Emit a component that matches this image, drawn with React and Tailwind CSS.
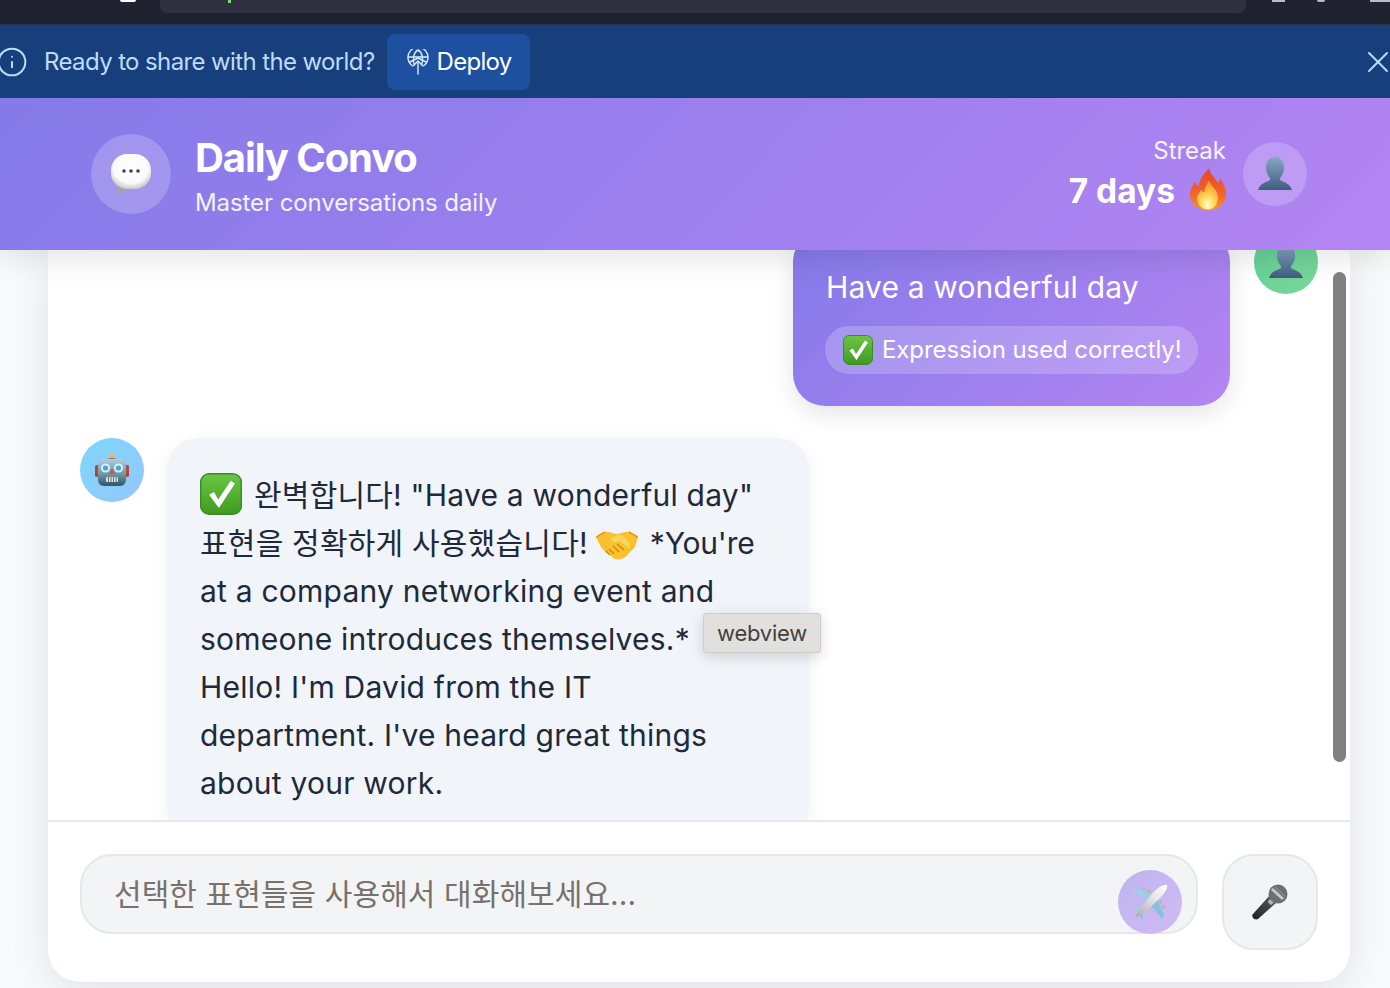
import React from 'react';
import { Info, X } from 'lucide-react';

const Balloon = ({ size = 42 }) => (
    <svg width={size} height={size} viewBox="0 0 42 42">
        <defs>
            <radialGradient id="balloonFill" cx="0.5" cy="0.4" r="0.62">
                <stop offset="0" stopColor="#ffffff" />
                <stop offset="0.7" stopColor="#fafafa" />
                <stop offset="1" stopColor="#c4c4c4" />
            </radialGradient>
        </defs>
        <path d="M9 30 C9 35 7 39 5 41 C11 40 16 37 19 33 Z" fill="#a3a3a3" />
        <rect x="1" y="1" width="40" height="35" rx="16" fill="url(#balloonFill)" />
        <circle cx="14" cy="18" r="1.8" fill="#444" />
        <circle cx="21" cy="18" r="1.8" fill="#444" />
        <circle cx="28" cy="18" r="1.8" fill="#444" />
    </svg>
);

const Person = ({ size = 36, id = 'bust' }) => (
    <svg width={size} height={size} viewBox="0 0 36 36">
        <defs>
            <linearGradient id={id} x1="0" y1="0" x2="0" y2="1">
                <stop offset="0" stopColor="#88a6c2" />
                <stop offset="1" stopColor="#3f5e80" />
            </linearGradient>
        </defs>
        <path
            d="M18 1 C24 1 27 6 27 12 C27 16 25 20 23 22 L23 24 C26 26 33 27 35 34 L1 34 C3 27 10 26 13 24 L13 22 C11 20 9 16 9 12 C9 6 12 1 18 1 Z"
            fill={`url(#${id})`}
        />
    </svg>
);

const Fire = () => (
    <svg width="36" height="43" viewBox="0 0 36 42" className="-mt-[4px]">
        <defs>
            <linearGradient id="flameOuter" x1="0" y1="0" x2="0" y2="1">
                <stop offset="0" stopColor="#e8452a" />
                <stop offset="0.6" stopColor="#f0642a" />
                <stop offset="1" stopColor="#f59a2c" />
            </linearGradient>
            <radialGradient id="flameInner" cx="0.5" cy="0.85" r="0.75">
                <stop offset="0" stopColor="#fffbe0" />
                <stop offset="0.35" stopColor="#ffe266" />
                <stop offset="1" stopColor="#fb9a2a" />
            </radialGradient>
        </defs>
        <path
            d="M19 0 C21 7 26 10 28 15 C29 13 30 12 30 10 C34 15 36 21 36 26 C36 35 28 42 18 42 C8 42 0 35 0 26 C0 21 3 17 5 13 C6 16 7 17 9 18 C9 11 14 5 19 0 Z"
            fill="url(#flameOuter)"
        />
        <path
            d="M19 12 C21 18 28 21 28 29 C28 36 24 41 18 41 C12 41 7 36 7 30 C7 26 10 24 11 21 C12 23 13 24 14 24 C14 20 17 16 19 12 Z"
            fill="url(#flameInner)"
        />
    </svg>
);

const Check = ({ size = 30, id = 'checkFill', className = '' }) => (
    <svg width={size} height={size} viewBox="0 0 30 30" className={`shrink-0 ${className}`}>
        <defs>
            <linearGradient id={id} x1="0" y1="0" x2="0" y2="1">
                <stop offset="0" stopColor="#6cc644" />
                <stop offset="1" stopColor="#3f9a22" />
            </linearGradient>
        </defs>
        <rect x="0.5" y="0.5" width="29" height="29" rx="6" fill={`url(#${id})`} stroke="#3d8a24" />
        <path d="M6.5 15.5 L10 13.5 L13 19 L22 5.5 L25 7.5 L13.5 25 Z" fill="#ffffff" />
    </svg>
);

const Handshake = () => (
    <svg width="42" height="30" viewBox="0 0 42 30" className="inline-block align-[-7px] mx-[8px]">
        <path d="M0 6 L9 1 C13 0 16 3 21 3 C26 3 29 0 33 1 L42 6 L39 16 L33 22 C31 26 27 27 25 28 C21 30 17 27 15 25 C11 23 8 20 5 16 Z" fill="#fbc02d" />
        <path d="M15 7 L22 4 C27 3 30 8 34 13 L33 18 C29 14 26 11 22 10 C19 12 16 12 15 7 Z" fill="#f9d65c" />
        <path d="M13 18 L18 23 M17 15 L23 21 M21 13 L28 19 M10 20 L14 24" stroke="#c98a12" strokeWidth="1.4" fill="none" />
        <path d="M0 6 L9 1 M33 1 L42 6" stroke="#e09a16" strokeWidth="1.5" />
    </svg>
);

const Robot = () => (
    <svg width="34" height="34" viewBox="0 0 34 34">
        <defs>
            <linearGradient id="robotHead" x1="0" y1="0" x2="0" y2="1">
                <stop offset="0" stopColor="#b5ccd6" />
                <stop offset="0.55" stopColor="#6f98a8" />
                <stop offset="1" stopColor="#2f5566" />
            </linearGradient>
        </defs>
        <circle cx="17" cy="3" r="2.6" fill="#f5b63c" />
        <path d="M12 7 C12 4.5 22 4.5 22 7 Z" fill="#6b4d9e" />
        <rect x="0" y="12" width="4" height="12" rx="1.5" fill="#b0483c" />
        <rect x="30" y="12" width="4" height="12" rx="1.5" fill="#b0483c" />
        <rect x="3" y="6" width="28" height="27" rx="6" fill="url(#robotHead)" />
        <circle cx="10.5" cy="15" r="4.6" fill="#d7eef7" />
        <circle cx="10.5" cy="15" r="2.6" fill="#3fa9d8" />
        <circle cx="23.5" cy="15" r="4.6" fill="#d7eef7" />
        <circle cx="23.5" cy="15" r="2.6" fill="#3fa9d8" />
        <path d="M17 15 L20 21 L14 21 Z" fill="#d8503f" />
        <rect x="11" y="24" width="12" height="5" rx="1.5" fill="#e6e6e6" />
        <path d="M13.5 24 V29 M16 24 V29 M18.5 24 V29 M21 24 V29" stroke="#4a4a4a" strokeWidth="0.8" />
    </svg>
);

const Plane = () => (
    <svg width="36" height="36" viewBox="0 0 36 36">
        <defs>
            <linearGradient id="planeBody" x1="0" y1="1" x2="1" y2="0">
                <stop offset="0" stopColor="#a9a9a9" />
                <stop offset="0.6" stopColor="#e6e6e6" />
                <stop offset="1" stopColor="#ffffff" />
            </linearGradient>
        </defs>
        <path d="M1 6 L5 4 L23 12 L17 19 Z" fill="#9ccfe6" />
        <path d="M30 35 L32 31 L24 13 L17 19 Z" fill="#86c2dc" />
        <path d="M1 25 L3 24 L11 26 L8 30 Z" fill="#9ccfe6" />
        <path d="M10 35 L11 33 L10 26 L6 29 Z" fill="#86c2dc" />
        <rect x="10" y="3" width="4" height="3" rx="1" fill="#b8b8b8" />
        <rect x="15" y="6" width="4" height="3" rx="1" fill="#b8b8b8" />
        <rect x="30" y="21" width="3" height="4" rx="1" fill="#b8b8b8" />
        <rect x="27" y="16" width="3" height="4" rx="1" fill="#b8b8b8" />
        <path d="M35 1 C36 5 32 10 26 16 L12 29 L3 34 L7 25 L20 10 C25 4 31 0 35 1 Z" fill="url(#planeBody)" />
    </svg>
);

const Mic = () => (
    <svg width="36" height="36" viewBox="0 0 36 36">
        <defs>
            <linearGradient id="micBody" x1="0" y1="1" x2="1" y2="0">
                <stop offset="0" stopColor="#1f1f1f" />
                <stop offset="1" stopColor="#5f5f5f" />
            </linearGradient>
        </defs>
        <path d="M18 11 L25 18 L6 35 C4 36 2 35 1 34 C0 32 0 31 1 30 Z" fill="url(#micBody)" />
        <rect x="16" y="15" width="6" height="5" rx="1.5" transform="rotate(-45 19 17)" fill="#b5b5b5" />
        <circle cx="26" cy="10" r="9.5" fill="#6f6f6f" />
        <path d="M20 5 L31 15" stroke="#c9c9c9" strokeWidth="3" />
        <path d="M23 3 L33 12" stroke="#8a8a8a" strokeWidth="1.5" />
    </svg>
);

const DeployIcon = () => (
    <svg width="22" height="26" viewBox="0 0 22 26" fill="none" stroke="#dbeafe" strokeWidth="1.4" strokeLinecap="round" strokeLinejoin="round">
        <path d="M6 17 A10 10 0 1 1 16 17" />
        <path d="M1.5 8 H20.5" />
        <path d="M3 13 L11 9 L19 13" />
        <path d="M7.5 16 C5 10 7 3 11 1 C15 3 17 10 14.5 16" />
        <path d="M11 25 V12" />
        <path d="M7 16 L11 12 L15 16" />
    </svg>
);

const App = () => {
    return (
        <div className="w-full h-[988px] flex flex-col overflow-hidden bg-[#f8fafc] text-[#1e293b] font-['Inter','Noto_Sans_CJK_KR',sans-serif]">
            {/* Browser chrome, cut off at the top */}
            <div className="h-[25px] shrink-0 bg-[#1f2330] border-b border-[#2e3348] flex items-start">
                <div className="w-[160px] shrink-0 flex justify-end pr-[24px]">
                    <div className="w-[16px] h-[2px] rounded-b-full bg-white" />
                </div>
                <div className="flex-1 h-[13px] bg-[#2d3142] rounded-b-lg pl-[68px]">
                    <div className="w-[3px] h-[3px] bg-[#7ddc6f]" />
                </div>
                <div className="w-[144px] shrink-0 flex pl-[26px]">
                    <div className="w-[13px] h-[2px] bg-[#b8bcc6]" />
                    <div className="ml-[32px] w-[8px] h-[2px] rounded-b-full bg-[#b8bcc6]" />
                    <div className="ml-[45px] w-[20px] h-[2px] bg-[#b8bcc6]" />
                </div>
            </div>

            {/* Deploy banner */}
            <div className="relative z-20 h-[73px] shrink-0 bg-[#173f7c] flex items-center">
                <Info size={32} strokeWidth={1.5} className="text-[#bfdbfe] -ml-[4px] shrink-0" />
                <span className="ml-[16px] text-[24px] tracking-[-0.62px] text-[#bfdbfe]">Ready to share with the world?</span>
                <button className="ml-[12px] h-[56px] w-[143px] rounded-lg bg-[#1e50a0] flex items-center pl-[20px] text-[24px] tracking-[-0.7px] text-white">
                    <DeployIcon />
                    <span className="ml-[8px]">Deploy</span>
                </button>
                <X size={36} strokeWidth={1.3} className="ml-auto -mr-[6px] text-[#bfdbfe] shrink-0" />
            </div>

            {/* Header */}
            <header className="relative z-10 h-[152px] shrink-0 flex items-center justify-between pl-[91px] pr-[83px] bg-[linear-gradient(135deg,#857ae9,#b385f2)] shadow-[0_6px_30px_rgba(0,0,0,0.12)]">
                <div className="flex items-center gap-[24px]">
                    <div className="w-[80px] h-[80px] rounded-full bg-white/20 flex items-center justify-center">
                        <Balloon />
                    </div>
                    <div className="pt-[6px]">
                        <h1 className="text-[40px] leading-[48px] font-bold tracking-[-1.1px] text-white">Daily Convo</h1>
                        <p className="text-[24px] leading-[36px] tracking-[-0.08px] text-white/90 mt-[3px]">Master conversations daily</p>
                    </div>
                </div>
                <div className="flex items-center gap-[17px]">
                    <div className="text-right pt-[2px]">
                        <div className="text-[24px] leading-[32px] text-white/90">Streak</div>
                        <div className="text-[33.5px] leading-[48px] font-bold text-white flex items-center justify-end gap-[15px]">
                            7 days <Fire />
                        </div>
                    </div>
                    <div className="w-[64px] h-[64px] rounded-full bg-white/20 flex items-center justify-center">
                        <Person id="bustHeader" />
                    </div>
                </div>
            </header>

            {/* Chat card */}
            <main className="flex-1 min-h-0 pl-[48px] pr-[40px] pb-[6px]">
                <div className="h-full bg-white rounded-b-[32px] shadow-[0_10px_40px_rgba(15,23,42,0.1)] flex flex-col overflow-hidden">
                    <div className="relative flex-1 min-h-0 overflow-hidden">
                        <div className="-mt-[20px] px-[32px] flex flex-col gap-[32px]">
                            <div className="flex justify-end items-start gap-[24px]">
                                <div className="w-[437px] pt-[33px] pb-[32px] px-[32px] rounded-[32px] bg-[linear-gradient(135deg,#857ae9,#b385f2)] text-white shadow-[0_8px_24px_rgba(0,0,0,0.1)]">
                                    <p className="text-[30px] leading-[48px] tracking-[0.15px] pl-[1px]">Have a wonderful day</p>
                                    <div className="mt-[15px] h-[48px] rounded-full bg-white/20 flex items-center pl-[18px] gap-[9px] text-[24px] tracking-[-0.08px] whitespace-nowrap">
                                        <Check id="checkSmall" />
                                        Expression used correctly!
                                    </div>
                                </div>
                                <div className="w-[64px] h-[64px] shrink-0 rounded-full bg-gradient-to-br from-[#5fcf94] to-[#7bd89a] flex items-center justify-center">
                                    <Person id="bustUser" />
                                </div>
                            </div>

                            <div className="flex items-start gap-[24px]">
                                <div className="w-[64px] h-[64px] shrink-0 rounded-full bg-gradient-to-br from-[#7dd8fa] to-[#93c5fd] flex items-center justify-center">
                                    <Robot />
                                </div>
                                <div className="-ml-[1px] w-[642px] py-[33px] pl-[33px] pr-[20px] rounded-[32px] bg-[#f1f5f9] text-[30px] leading-[48px] tracking-[0.22px] whitespace-nowrap shadow-[0_4px_20px_rgba(15,23,42,0.05)]">
                                    <Check size={42} id="checkBig" className="inline-block -my-[10px] mr-[12px] align-[1px]" />
                                    완벽합니다! "Have a wonderful day"<br />
                                    표현을 정확하게 사용했습니다!<Handshake /><span className="ml-[4px] tracking-[-0.2px]">*You're</span><br />
                                    at a company networking event and<br />
                                    someone introduces themselves.*<br />
                                    Hello! I'm David from the IT<br />
                                    department. I've heard great things<br />
                                    about your work.
                                </div>
                            </div>
                        </div>

                        {/* Scrollbar thumb */}
                        <div className="absolute right-[4px] top-[22px] w-[13px] h-[490px] rounded-full bg-[#808080]" />
                        {/* Tooltip */}
                        <div className="absolute left-[655px] top-[363px] h-[40px] w-[118px] flex items-center justify-center rounded-[3px] border border-[#cfcdca] bg-[#e1e0de] text-[22px] tracking-[-0.25px] text-[#44403c] shadow-[0_4px_14px_rgba(0,0,0,0.15)]">
                            webview
                        </div>
                    </div>

                    {/* Input row */}
                    <div className="shrink-0 border-t-2 border-[#e5e7eb] p-[32px] flex items-start gap-[24px]">
                        <div className="relative flex-1">
                            <input
                                readOnly
                                placeholder="선택한 표현들을 사용해서 대화해보세요..."
                                className="w-full h-[80px] rounded-[32px] border-2 border-[#e5e7eb] bg-[#f3f4f6] pl-[32px] pr-[90px] text-[30px] tracking-[0.08px] placeholder:text-[#78716c] outline-none"
                            />
                            <button className="absolute right-[16px] top-[16px] w-[64px] h-[64px] rounded-full bg-gradient-to-br from-[#bdb4ef] to-[#d2baf5] flex items-center justify-center">
                                <Plane />
                            </button>
                        </div>
                        <button className="w-[96px] h-[96px] shrink-0 rounded-[32px] border-2 border-[#e5e7eb] bg-[#f3f4f6] flex items-center justify-center">
                            <Mic />
                        </button>
                    </div>
                </div>
            </main>
        </div>
    );
};

export default App;
